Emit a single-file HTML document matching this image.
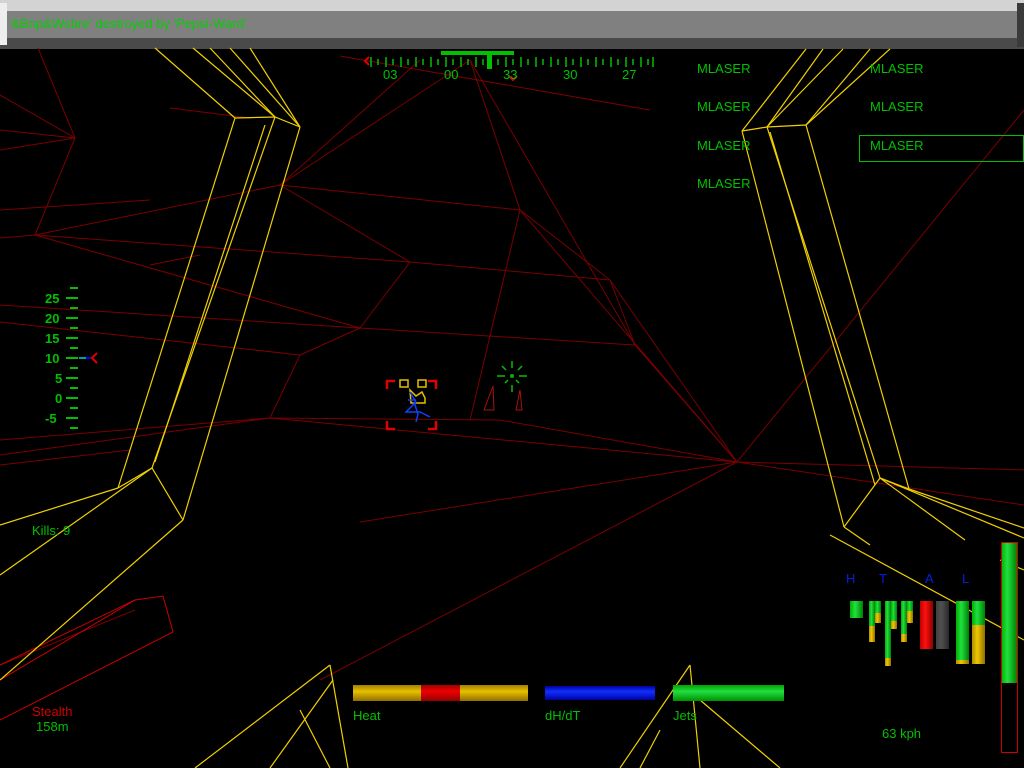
<!DOCTYPE html>
<html><head><style>
html,body{margin:0;padding:0;background:#000;width:1024px;height:768px;overflow:hidden}
svg{position:absolute;left:0;top:0}
text{font-family:"Liberation Sans",sans-serif;font-size:13px}
</style></head><body>
<svg width="1024" height="768" viewBox="0 0 1024 768">
<rect x="0" y="0" width="1024" height="768" fill="#000"/>
<rect x="0" y="0" width="1024" height="11" fill="#d3d3d3"/>
<rect x="0" y="11" width="1024" height="27" fill="#808080"/>
<rect x="0" y="38" width="1024" height="11" fill="#4a4a4a"/>
<rect x="0" y="3" width="7" height="42" fill="#eeeeee"/>
<rect x="1017" y="3" width="7" height="44" fill="#3a3a3a"/>
<text x="9" y="28" fill="#00d000" font-size="13">'&amp;Bnp&amp;Wsbre' destroyed by 'Pepsi-Ward'.</text>

<g stroke="#7a0000" stroke-width="1" fill="none">
<polyline points="0,440 270,418 500,420 737,462 1024,470"/>
<line x1="0" y1="455" x2="270" y2="418"/>
<line x1="0" y1="465" x2="130" y2="450"/>
<line x1="360" y1="522" x2="737" y2="462"/>
<line x1="737" y1="462" x2="1024" y2="110"/>
<line x1="737" y1="462" x2="610" y2="280"/>
<line x1="737" y1="462" x2="270" y2="418"/>
<line x1="520" y1="210" x2="737" y2="462"/>
<line x1="520" y1="210" x2="610" y2="280"/>
<line x1="610" y1="280" x2="635" y2="345"/>
<line x1="280" y1="185" x2="520" y2="210"/>
<line x1="470" y1="60" x2="280" y2="185"/>
<line x1="470" y1="60" x2="520" y2="210"/>
<line x1="470" y1="60" x2="635" y2="345"/>
<line x1="420" y1="60" x2="280" y2="185"/>
<line x1="340" y1="56" x2="650" y2="110"/>
<line x1="35" y1="235" x2="280" y2="185"/>
<line x1="35" y1="235" x2="410" y2="262"/>
<line x1="35" y1="235" x2="360" y2="328"/>
<line x1="280" y1="185" x2="410" y2="262"/>
<line x1="410" y1="262" x2="360" y2="328"/>
<line x1="410" y1="262" x2="610" y2="280"/>
<line x1="0" y1="305" x2="360" y2="328"/>
<line x1="0" y1="322" x2="300" y2="355"/>
<line x1="300" y1="355" x2="360" y2="328"/>
<line x1="300" y1="355" x2="270" y2="418"/>
<line x1="360" y1="328" x2="635" y2="345"/>
<line x1="0" y1="150" x2="75" y2="138"/>
<line x1="0" y1="95" x2="75" y2="138"/>
<line x1="0" y1="130" x2="75" y2="138"/>
<line x1="38" y1="48" x2="75" y2="138"/>
<line x1="75" y1="138" x2="35" y2="235"/>
<line x1="0" y1="238" x2="35" y2="235"/>
<line x1="150" y1="265" x2="200" y2="255"/>
<line x1="0" y1="210" x2="150" y2="200"/>
<line x1="170" y1="108" x2="250" y2="118"/>
<line x1="635" y1="345" x2="737" y2="462"/>
<line x1="520" y1="210" x2="470" y2="420"/>
<line x1="0" y1="665" x2="135" y2="610"/>
<line x1="320" y1="680" x2="737" y2="462"/>
<line x1="737" y1="462" x2="1024" y2="505"/>
</g>
<g stroke="#cc0000" fill="none">
<polyline points="0,680 135,600 163,596 173,632 0,720"/>
<line x1="135" y1="600" x2="0" y2="665"/>
</g>
<g stroke="#aa1010" fill="none">
<polygon points="484,410 493,386 494,410"/>
<polygon points="516,410 520,390 522,410"/>
</g>

<g stroke="#f0d000" stroke-width="1.2" fill="none">
<polyline points="235,118 275,117 300,127"/>
<line x1="235" y1="118" x2="155" y2="48"/>
<line x1="275" y1="117" x2="193" y2="48"/>
<line x1="275" y1="117" x2="210" y2="48"/>
<line x1="300" y1="127" x2="230" y2="48"/>
<line x1="300" y1="127" x2="250" y2="48"/>
<line x1="235" y1="118" x2="118" y2="488"/>
<line x1="275" y1="117" x2="152" y2="468"/>
<line x1="265" y1="125" x2="155" y2="462"/>
<line x1="300" y1="127" x2="183" y2="520"/>
<polyline points="118,488 152,468 183,520"/>
<line x1="118" y1="488" x2="0" y2="525"/>
<line x1="152" y1="468" x2="0" y2="575"/>
<line x1="183" y1="520" x2="0" y2="680"/>
<polyline points="742,131 767,127 806,125"/>
<line x1="742" y1="131" x2="806" y2="49"/>
<line x1="767" y1="127" x2="823" y2="49"/>
<line x1="767" y1="127" x2="843" y2="49"/>
<line x1="806" y1="125" x2="870" y2="49"/>
<line x1="806" y1="125" x2="890" y2="49"/>
<line x1="742" y1="131" x2="844" y2="527"/>
<line x1="767" y1="127" x2="880" y2="478"/>
<line x1="770" y1="132" x2="875" y2="485"/>
<line x1="806" y1="125" x2="909" y2="489"/>
<polyline points="844,527 880,478 909,489"/>
<line x1="880" y1="478" x2="1024" y2="538"/>
<line x1="909" y1="489" x2="1024" y2="528"/>
<line x1="844" y1="527" x2="870" y2="545"/>
<line x1="880" y1="478" x2="965" y2="540"/>
<line x1="1000" y1="560" x2="1024" y2="570"/>
<line x1="830" y1="535" x2="1024" y2="640"/>
<line x1="330" y1="665" x2="195" y2="768"/>
<line x1="330" y1="665" x2="348" y2="768"/>
<line x1="333" y1="680" x2="270" y2="768"/>
<line x1="300" y1="710" x2="330" y2="768"/>
<line x1="690" y1="665" x2="620" y2="768"/>
<line x1="690" y1="665" x2="700" y2="768"/>
<line x1="700" y1="700" x2="780" y2="768"/>
<line x1="660" y1="730" x2="640" y2="768"/>
</g>

<g fill="#00c000">
<rect x="441" y="51" width="73" height="4"/>
<rect x="487" y="55" width="5" height="14"/>
</g>
<g stroke="#00c000" stroke-width="1.5">
<path d="M371,57v10M378,59v6M386,57v10M393,59v6M401,57v10M408,59v6M416,57v10M423,59v6M431,57v10M438,59v6M446,57v10M453,59v6M461,57v10M468,59v6M476,57v10M483,59v6M498,59v6M506,57v10M513,59v6M521,57v10M528,59v6M536,57v10M543,59v6M551,57v10M558,59v6M566,57v10M573,59v6M581,57v10M588,59v6M596,57v10M603,59v6M611,57v10M618,59v6M626,57v10M633,59v6M641,57v10M648,59v6M653,57v10"/>
</g>
<path d="M369,57 l-4,4 4,4" stroke="#e00000" stroke-width="2" fill="none"/>
<path d="M509,76 l4,4 4,-4" stroke="#e00000" stroke-width="2" fill="none"/>
<g fill="#00c000" font-size="13">
<text x="383" y="79">03</text><text x="444" y="79">00</text><text x="503" y="79">33</text><text x="563" y="79">30</text><text x="622" y="79">27</text>
</g>

<g fill="#00c000" font-size="13">
<text x="697" y="73">MLASER</text><text x="697" y="111">MLASER</text><text x="697" y="150">MLASER</text><text x="697" y="188">MLASER</text>
<text x="870" y="73">MLASER</text><text x="870" y="111">MLASER</text><text x="870" y="150">MLASER</text>
</g>
<rect x="859.5" y="135.5" width="164" height="26" stroke="#00c000" fill="none"/>

<g fill="#00c000" font-family="Liberation Mono" font-weight="bold" font-size="14">
<text x="45" y="303">25</text><text x="45" y="323">20</text><text x="45" y="343">15</text><text x="45" y="363">10</text>
<text x="55" y="383">5</text><text x="55" y="403">0</text><text x="45" y="423">-5</text>
</g>
<g stroke="#00c000" stroke-width="2">
<path d="M70,288h8M66,298h12M70,308h8M66,318h12M70,328h8M66,338h12M70,348h8M66,358h12M70,368h8M66,378h12M70,388h8M66,398h12M70,408h8M66,418h12M70,428h8"/>
</g>
<path d="M79,358h7" stroke="#00a0a0" stroke-width="2"/>
<path d="M86,358h5" stroke="#0000ff" stroke-width="2"/>
<path d="M97,353l-5,5 5,5" stroke="#e00000" stroke-width="2" fill="none"/>

<g stroke="#e00000" stroke-width="2.5" fill="none">
<path d="M387,389v-8h8M436,389v-8h-8M387,421v8h8M436,421v8h-8"/>
</g>
<g stroke="#e6c000" stroke-width="1.5" fill="none">
<rect x="400" y="380" width="8" height="7"/><rect x="418" y="380" width="8" height="7"/>
<path d="M410,390l6,6 6,-4 3,6v5h-14z"/>
</g>
<g stroke="#1040ff" stroke-width="1.5" fill="none">
<path d="M410,392l6,10 -10,10h14l10,5M414,402l4,12 -2,8M408,400h8"/>
</g>
<g stroke="#00c000" stroke-width="1.5" fill="none">
<path d="M512,361v7M512,385v7M497,376h8M519,376h8M502,366l4,4M522,366l-4,4M505,383l3,-3M519,383l-3,-3"/>
<rect x="511" y="375" width="2" height="2" fill="#00c000"/>
</g>

<text x="32" y="535" fill="#00c000">Kills: 9</text>
<text x="32" y="716" fill="#d00000">Stealth</text>
<text x="36" y="731" fill="#00c000">158m</text>
<text x="882" y="738" fill="#00c000">63 kph</text>

<defs>
<linearGradient id="gy" x1="0" y1="0" x2="0" y2="1"><stop offset="0" stop-color="#a08000"/><stop offset=".4" stop-color="#e8c000"/><stop offset="1" stop-color="#907000"/></linearGradient>
<linearGradient id="gr" x1="0" y1="0" x2="0" y2="1"><stop offset="0" stop-color="#a00000"/><stop offset=".4" stop-color="#f00000"/><stop offset="1" stop-color="#900000"/></linearGradient>
<linearGradient id="gb" x1="0" y1="0" x2="0" y2="1"><stop offset="0" stop-color="#0000a0"/><stop offset=".4" stop-color="#1030ff"/><stop offset="1" stop-color="#0000a0"/></linearGradient>
<linearGradient id="gg" x1="0" y1="0" x2="0" y2="1"><stop offset="0" stop-color="#00a000"/><stop offset=".4" stop-color="#20e040"/><stop offset="1" stop-color="#009000"/></linearGradient>
<linearGradient id="vg" x1="0" y1="0" x2="1" y2="0"><stop offset="0" stop-color="#00b000"/><stop offset=".4" stop-color="#20e040"/><stop offset="1" stop-color="#008000"/></linearGradient>
<linearGradient id="vy" x1="0" y1="0" x2="1" y2="0"><stop offset="0" stop-color="#b09000"/><stop offset=".4" stop-color="#f0c800"/><stop offset="1" stop-color="#907000"/></linearGradient>
<linearGradient id="vr" x1="0" y1="0" x2="1" y2="0"><stop offset="0" stop-color="#c00000"/><stop offset=".4" stop-color="#ff1010"/><stop offset="1" stop-color="#900000"/></linearGradient>
<linearGradient id="vk" x1="0" y1="0" x2="1" y2="0"><stop offset="0" stop-color="#404040"/><stop offset=".4" stop-color="#505050"/><stop offset="1" stop-color="#2a2a2a"/></linearGradient>
</defs>
<rect x="353" y="685" width="175" height="16" fill="url(#gy)"/>
<rect x="421" y="685" width="39" height="16" fill="url(#gr)"/>
<rect x="545" y="686" width="110" height="14" fill="url(#gb)"/>
<rect x="673" y="685" width="111" height="16" fill="url(#gg)"/>
<text x="353" y="720" fill="#00c000">Heat</text>
<text x="545" y="720" fill="#00c000">dH/dT</text>
<text x="673" y="720" fill="#00c000">Jets</text>

<g fill="#0020e0" font-size="13">
<text x="846" y="583">H</text><text x="879" y="583">T</text><text x="925" y="583">A</text><text x="962" y="583">L</text>
</g>
<rect x="850" y="601" width="13" height="17" fill="url(#vg)"/>
<rect x="869" y="601" width="6" height="25" fill="url(#vg)"/><rect x="869" y="626" width="6" height="16" fill="url(#vy)"/>
<rect x="875" y="601" width="6" height="12" fill="url(#vg)"/><rect x="875" y="613" width="6" height="10" fill="url(#vy)"/>
<rect x="885" y="601" width="6" height="57" fill="url(#vg)"/><rect x="885" y="658" width="6" height="8" fill="url(#vy)"/>
<rect x="891" y="601" width="6" height="20" fill="url(#vg)"/><rect x="891" y="621" width="6" height="8" fill="url(#vy)"/>
<rect x="901" y="601" width="6" height="33" fill="url(#vg)"/><rect x="901" y="634" width="6" height="8" fill="url(#vy)"/>
<rect x="907" y="601" width="6" height="10" fill="url(#vg)"/><rect x="907" y="611" width="6" height="12" fill="url(#vy)"/>
<rect x="920" y="601" width="13" height="48" fill="url(#vr)"/>
<rect x="936" y="601" width="13" height="48" fill="url(#vk)"/>
<rect x="956" y="601" width="13" height="59" fill="url(#vg)"/><rect x="956" y="660" width="13" height="4" fill="url(#vy)"/>
<rect x="972" y="601" width="13" height="24" fill="url(#vg)"/><rect x="972" y="625" width="13" height="39" fill="url(#vy)"/>
<rect x="1001" y="543" width="16" height="140" fill="url(#vg)"/>
<rect x="1001.5" y="542.5" width="16" height="210" stroke="#d00000" fill="none"/>
</svg>
</body></html>
